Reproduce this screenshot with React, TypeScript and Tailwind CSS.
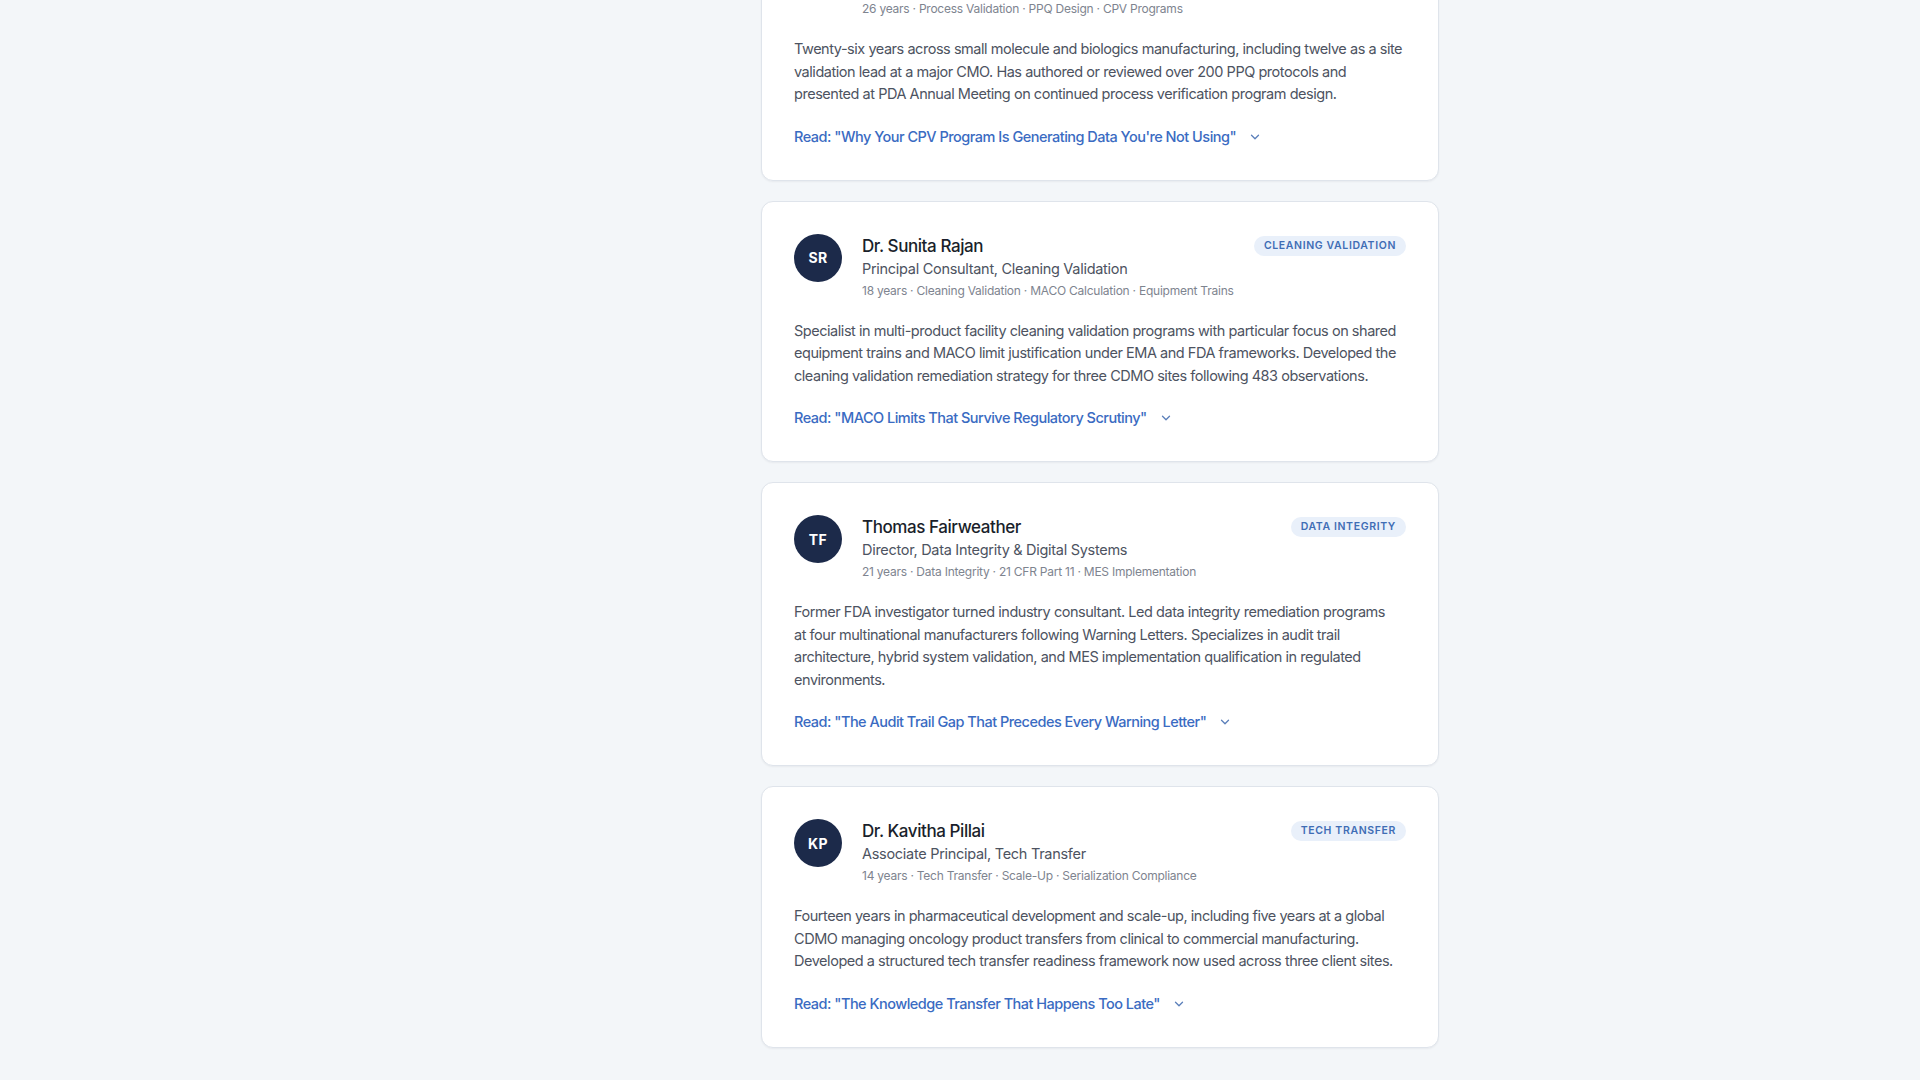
import { ChevronDown } from "lucide-react";

type Expert = {
  initials: string;
  name: string;
  role: string;
  meta: string[];
  tag: string;
  bio: string;
  article: string;
};

const experts: Expert[] = [
  {
    initials: "MH",
    name: "Dr. Michael Hartley",
    role: "Senior Principal, Process Validation",
    meta: ["26 years", "Process Validation", "PPQ Design", "CPV Programs"],
    tag: "Process Validation",
    bio: "Twenty-six years across small molecule and biologics manufacturing, including twelve as a site validation lead at a major CMO. Has authored or reviewed over 200 PPQ protocols and presented at PDA Annual Meeting on continued process verification program design.",
    article: "Why Your CPV Program Is Generating Data You're Not Using",
  },
  {
    initials: "SR",
    name: "Dr. Sunita Rajan",
    role: "Principal Consultant, Cleaning Validation",
    meta: ["18 years", "Cleaning Validation", "MACO Calculation", "Equipment Trains"],
    tag: "Cleaning Validation",
    bio: "Specialist in multi-product facility cleaning validation programs with particular focus on shared equipment trains and MACO limit justification under EMA and FDA frameworks. Developed the cleaning validation remediation strategy for three CDMO sites following 483 observations.",
    article: "MACO Limits That Survive Regulatory Scrutiny",
  },
  {
    initials: "TF",
    name: "Thomas Fairweather",
    role: "Director, Data Integrity & Digital Systems",
    meta: ["21 years", "Data Integrity", "21 CFR Part 11", "MES Implementation"],
    tag: "Data Integrity",
    // keep "at four" together so the first line breaks after "programs"
    bio: "Former FDA investigator turned industry consultant. Led data integrity remediation programs at\u00a0four multinational manufacturers following Warning Letters. Specializes in audit trail architecture, hybrid system validation, and MES implementation qualification in regulated environments.",
    article: "The Audit Trail Gap That Precedes Every Warning Letter",
  },
  {
    initials: "KP",
    name: "Dr. Kavitha Pillai",
    role: "Associate Principal, Tech Transfer",
    meta: ["14 years", "Tech Transfer", "Scale-Up", "Serialization Compliance"],
    tag: "Tech Transfer",
    bio: "Fourteen years in pharmaceutical development and scale-up, including five years at a global CDMO managing oncology product transfers from clinical to commercial manufacturing. Developed a structured tech transfer readiness framework now used across three client sites.",
    article: "The Knowledge Transfer That Happens Too Late",
  },
];

function ExpertCard({ e }: { e: Expert }) {
  return (
    <div className="bg-white border border-[#dfe4eb] rounded-xl p-8 shadow-[0_1px_2px_rgba(15,23,42,0.05)]">
      <div className="flex items-start gap-5">
        <div className="w-12 h-12 shrink-0 rounded-full bg-[#1c2a4a] text-white flex items-center justify-center text-[14px] font-bold tracking-wide">
          {e.initials}
        </div>
        <div className="flex-1 min-w-0">
          <div className="flex items-center justify-between gap-4">
            <h3 className="text-[17px] leading-6 font-medium text-[#1a1f2b] tracking-[-0.025em]">
              {e.name}
            </h3>
            <span className="px-2.5 h-5 flex items-center rounded-full bg-[#e9f0fa] text-[#3f6db5] text-[10.5px] font-semibold uppercase tracking-[0.06em]">
              {e.tag}
            </span>
          </div>
          <p className="text-[14.5px] leading-[22px] text-[#4d5361] tracking-[-0.02em]">
            {e.role}
          </p>
          <p className="mt-0.5 text-[12px] leading-[18px] text-[#7e848f] tracking-[-0.02em]">
            {e.meta.join(" · ")}
          </p>
        </div>
      </div>
      <p className="mt-5 text-[14.5px] leading-[22.5px] text-[#4d5361] tracking-[-0.032em]">
        {e.bio}
      </p>
      <button className="mt-5 flex items-center gap-3 text-[14.5px] leading-[22px] font-medium text-[#3a6bc2] tracking-[-0.035em]">
        <span>Read: "{e.article}"</span>
        <ChevronDown className="w-3.5 h-3.5 text-[#5b7fba]" strokeWidth={2.25} />
      </button>
    </div>
  );
}

export default function App() {
  return (
    <div
      className="min-h-screen bg-[#f3f6f9] overflow-hidden"
      style={{ fontFamily: "Inter, 'Noto Sans', sans-serif" }}
    >
      <div className="grid grid-cols-[761px_678px] -mt-[81px] pb-[37px]">
        <div />
        <div className="flex flex-col gap-5">
          {experts.map((e) => (
            <ExpertCard key={e.initials} e={e} />
          ))}
        </div>
      </div>
    </div>
  );
}
